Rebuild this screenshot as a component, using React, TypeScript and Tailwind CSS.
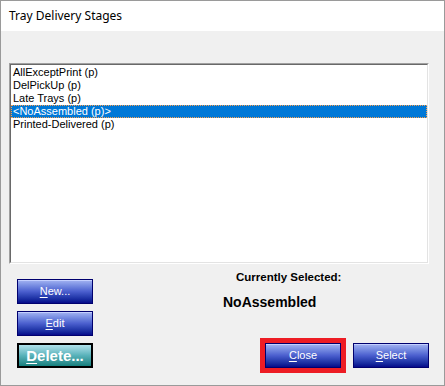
import React from "react";

const F = { fontFamily: '"Liberation Sans", Arial, sans-serif' };

function NavyButton({ children }: { children: React.ReactNode }) {
  return (
    <div className="w-[76px] h-[25px] border border-[#00006e] bg-gradient-to-b from-[#a4b4f2] via-[#4b5fce] to-[#07078a] flex items-center justify-center text-white text-[11px] leading-none shadow-[inset_0_1px_0_#c4d0ff]">
      {children}
    </div>
  );
}

const items = [
  "AllExceptPrint (p)",
  "DelPickUp (p)",
  "Late Trays (p)",
  "<NoAssembled (p)>",
  "Printed-Delivered (p)",
];

export default function App() {
  return (
    <div
      className="w-[445px] h-[386px] border border-[#9a9a9a] bg-[#f0f0f0] flex flex-col text-black"
      style={F}
    >
      <div
        className="h-[30px] bg-white shrink-0 flex items-start pl-[8px] pt-[7px] text-[12px] leading-[16px] text-[#000]"
        style={{ fontFamily: '"Noto Sans", "Liberation Sans", sans-serif' }}
      >
        Tray Delivery Stages
      </div>
      <div className="ml-[8px] mt-[32px] w-[420px] h-[201px] border border-t-[#a0a0a0] border-l-[#a0a0a0] border-r-white border-b-white">
        <div className="w-full h-full border border-t-[#696969] border-l-[#696969] border-r-[#e3e3e3] border-b-[#e3e3e3] bg-white pt-[1px]">
          {items.map((t, i) =>
            i === 3 ? (
              <div
                key={t}
                className="h-[13px] bg-[#0078d7] text-white text-[11px] leading-[11px] pl-[1px] border border-dotted border-[#f8a050] whitespace-pre"
              >
                {t}
              </div>
            ) : (
              <div
                key={t}
                className="h-[13px] text-[11px] leading-[13px] pl-[2px] whitespace-pre"
              >
                {t}
              </div>
            )
          )}
        </div>
      </div>
      <div className="flex flex-row">
        <div className="ml-[16px] mt-[15px] flex flex-col gap-[7px]">
          <NavyButton>
            <span>
              <span className="underline underline-offset-2">N</span>ew...
            </span>
          </NavyButton>
          <NavyButton>
            <span>
              <span className="underline underline-offset-2">E</span>dit
            </span>
          </NavyButton>
          <div className="w-[76px] h-[25px] border-2 border-black bg-gradient-to-b from-[#b0e2ec] via-[#58b2ba] to-[#13807e] flex items-center justify-center text-white text-[15px] font-bold leading-none">
            <span>
              <span className="underline underline-offset-2">D</span>elete...
            </span>
          </div>
        </div>
        <div className="flex flex-col">
          <div className="ml-[143px] mt-[6px] text-[11.5px] leading-[14px] font-bold whitespace-nowrap">
            Currently Selected:
          </div>
          <div className="ml-[130px] mt-[10px] text-[14px] leading-[17px] font-bold whitespace-nowrap">
            NoAssembled
          </div>
          <div className="ml-[167px] mt-[27px] flex flex-row items-start gap-[7px]">
            <div className="border-[5px] border-[#ed1c24]">
              <NavyButton>
                <span>
                  <span className="underline underline-offset-2">C</span>lose
                </span>
              </NavyButton>
            </div>
            <div className="mt-[5px]">
              <NavyButton>
                <span>
                  <span className="underline underline-offset-2">S</span>elect
                </span>
              </NavyButton>
            </div>
          </div>
        </div>
      </div>
    </div>
  );
}
